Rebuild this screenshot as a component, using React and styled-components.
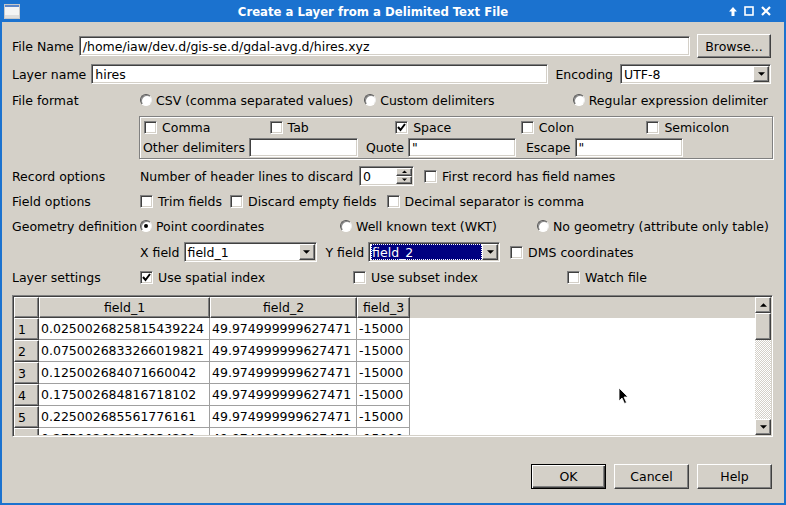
import React from "react";
import styled, { createGlobalStyle } from "styled-components";

const GlobalStyle = createGlobalStyle`
  html, body { margin: 0; padding: 0; background: #d4d0c8; }
  body {
    font-family: "DejaVu Sans", "Liberation Sans", sans-serif;
    font-size: 12.5px;
    color: #000;
  }
  * { box-sizing: border-box; }
`;

// margin helper: numbers become px, strings (like "auto") pass through
const px = (v) => (typeof v === "number" ? `${v}px` : v || 0);

const Window = styled.div`
  position: relative;
  width: 786px;
  height: 505px;
  display: flex;
  flex-direction: column;
  background: #d4d0c8;
  border: 2px solid #1b72cf;
  border-top: none;
  overflow: hidden;
`;

const TitleBar = styled.div`
  height: 22px;
  flex: none;
  display: flex;
  align-items: center;
  background: #1b72cf;
  color: #fff;
  margin: 0 -2px;
`;

const TitleIcon = styled.div`
  width: 24px;
  display: flex;
  justify-content: flex-end;
  padding-right: 4px;
`;

const TitleText = styled.div`
  flex: 1;
  text-align: center;
  font-family: "DejaVu Sans Condensed", "DejaVu Sans", sans-serif;
  font-weight: bold;
  font-size: 13px;
`;

const TitleButtons = styled.div`
  width: 64px;
  display: flex;
  align-items: center;
  gap: 5px;
  padding-left: 6px;
`;

const Content = styled.div`
  flex: 1;
  display: flex;
  flex-direction: column;
  padding: 11px 11px 0 10px;
`;

const FlexRow = styled.div`
  display: flex;
  align-items: center;
  height: ${(p) => p.h || 22}px;
  margin-top: ${(p) => p.mt || 0}px;
  gap: ${(p) => p.gap || 0}px;
`;

const FormRow = styled.div`
  display: grid;
  grid-template-columns: 128px 1fr;
  align-items: center;
  height: 22px;
  margin-top: ${(p) => p.mt || 0}px;
`;

const Label = styled.span`
  white-space: nowrap;
  margin-left: ${(p) => px(p.ml)};
  margin-right: ${(p) => px(p.mr)};
`;

const sunken = `
  background: #fff;
  border: 1px solid;
  border-color: #808080 #fff #fff #808080;
  box-shadow: inset 1px 1px #404040, inset -1px -1px #d4d0c8;
`;

const raised = `
  background: #d4d0c8;
  border: 1px solid;
  border-color: #fff #404040 #404040 #fff;
  box-shadow: inset -1px -1px #808080;
`;

const TextInput = styled.div`
  ${sunken}
  height: ${(p) => p.h || 20}px;
  width: ${(p) => (p.w ? p.w + "px" : "auto")};
  flex: ${(p) => (p.w ? "none" : 1)};
  display: flex;
  align-items: center;
  padding-left: 3px;
  white-space: nowrap;
  overflow: hidden;
  margin-left: ${(p) => px(p.ml)};
`;

const Button = styled.div`
  ${raised}
  width: ${(p) => p.w}px;
  height: ${(p) => p.h || 25}px;
  display: flex;
  align-items: center;
  justify-content: center;
  flex: none;
  margin-left: ${(p) => px(p.ml)};
  margin-right: ${(p) => px(p.mr)};
  ${(p) =>
    p.primary &&
    `
    border-color: #000;
    box-shadow: inset 1px 1px #fff, inset -1px -1px #404040, inset -2px -2px #808080;
  `}
`;

const ComboBox = styled.div`
  ${sunken}
  width: ${(p) => p.w}px;
  height: 20px;
  display: flex;
  align-items: stretch;
  padding: 2px;
  flex: none;
  margin-left: ${(p) => px(p.ml)};
  margin-right: ${(p) => px(p.mr)};
`;

const ComboValue = styled.div`
  flex: 1;
  display: flex;
  align-items: center;
  padding-left: 1px;
  background: ${(p) => (p.selected ? "#000080" : "transparent")};
  color: ${(p) => (p.selected ? "#fff" : "#000")};
  outline: ${(p) => (p.selected ? "1px dotted #fff" : "none")};
  outline-offset: -1px;
  margin-top: -1px;
  margin-bottom: -1px;
`;

const ArrowButton = styled.div`
  ${raised}
  width: 16px;
  margin: -1px -1px -1px 0;
  display: flex;
  align-items: center;
  justify-content: center;
`;

const Tri = ({ up, size = 7 }) => (
  <svg width={size} height={Math.ceil(size / 2) + 1} viewBox="0 0 8 5">
    {up ? <polygon points="0,4 8,4 4,0" fill="#000" /> : <polygon points="0,0 8,0 4,4" fill="#000" />}
  </svg>
);

const Combo = ({ w, value, selected, ml, mr }) => (
  <ComboBox w={w} ml={ml} mr={mr}>
    <ComboValue selected={selected}>{value}</ComboValue>
    <ArrowButton>
      <Tri />
    </ArrowButton>
  </ComboBox>
);

const Option = styled.label`
  display: inline-flex;
  align-items: center;
  gap: 4px;
  white-space: nowrap;
  margin-left: ${(p) => px(p.ml)};
  margin-right: ${(p) => px(p.mr)};
`;

const RadioDot = styled.span`
  width: 12px;
  height: 12px;
  border-radius: 50%;
  background: #fff;
  border: 1px solid;
  border-color: #555 #eee #fff #555;
  box-shadow: inset 1px 1px #888;
  display: flex;
  align-items: center;
  justify-content: center;
  flex: none;
  &::after {
    content: "";
    width: 4px;
    height: 4px;
    border-radius: 50%;
    background: ${(p) => (p.on ? "#000" : "transparent")};
  }
`;

const Box = styled.span`
  ${sunken}
  width: 13px;
  height: 13px;
  flex: none;
  display: flex;
  align-items: center;
  justify-content: center;
  margin-right: 1px;
`;

const Radio = ({ on, children, ml, mr }) => (
  <Option ml={ml} mr={mr}>
    <RadioDot on={on} />
    {children}
  </Option>
);

const Check = ({ on, children, ml, mr }) => (
  <Option ml={ml} mr={mr}>
    <Box>
      {on && (
        <svg width="9" height="9" viewBox="0 0 9 9">
          <path d="M1 4 L3.5 7 L8 1" stroke="#000" strokeWidth="2" fill="none" />
        </svg>
      )}
    </Box>
    {children}
  </Option>
);

const GroupBox = styled.div`
  margin: 5px 0 0 127px;
  height: 43px;
  border: 1px solid #808080;
  box-shadow: 1px 1px #fff, inset 1px 1px #fff;
  display: flex;
  flex-direction: column;
`;

const DelimGrid = styled.div`
  display: grid;
  grid-template-columns: repeat(5, minmax(0, 1fr));
  align-items: center;
  height: 20px;
  padding-left: 4px;
`;

const DelimRow = styled.div`
  display: flex;
  align-items: center;
  height: 20px;
  padding-left: 3px;
`;

const ColGrid = styled.div`
  display: grid;
  grid-template-columns: ${(p) => p.cols};
  align-items: center;
`;

const Spin = styled.div`
  ${sunken}
  width: 55px;
  height: 20px;
  display: flex;
  align-items: stretch;
  padding: 2px;
  margin-left: 6px;
  flex: none;
`;

const SpinValue = styled.div`
  flex: 1;
  display: flex;
  align-items: center;
  padding-left: 1px;
`;

const SpinButtons = styled.div`
  width: 16px;
  display: flex;
  flex-direction: column;
  margin: -1px -1px -1px 0;
`;

const SpinBtn = styled.div`
  ${raised}
  flex: 1;
  display: flex;
  align-items: center;
  justify-content: center;
`;

const Table = styled.div`
  ${sunken}
  margin-top: 7px;
  height: 142px;
  display: flex;
  padding: 1px;
`;

const Grid = styled.div`
  flex: 1;
  overflow: hidden;
  background: #fff;
  display: flex;
  flex-direction: column;
`;

const HeaderRow = styled.div`
  display: flex;
  height: 21px;
  flex: none;
  background: #d4d0c8;
`;

const HeadCell = styled.div`
  ${raised}
  width: ${(p) => p.w}px;
  flex: none;
  display: flex;
  align-items: center;
  justify-content: center;
`;

const BodyRow = styled.div`
  display: flex;
  height: 22px;
  flex: none;
`;

const RowHead = styled.div`
  ${raised}
  width: 25px;
  flex: none;
  display: flex;
  align-items: center;
  padding-left: 3px;
`;

const Cell = styled.div`
  width: ${(p) => p.w}px;
  flex: none;
  display: flex;
  align-items: center;
  padding-left: 2px;
  border-right: 1px solid #a0a0a0;
  border-bottom: 1px solid #a0a0a0;
  white-space: nowrap;
  overflow: hidden;
`;

const ScrollBar = styled.div`
  width: 16px;
  flex: none;
  display: flex;
  flex-direction: column;
  background: repeating-conic-gradient(#d4d0c8 0 25%, #fff 0 50%) 0 0 / 2px 2px;
`;

const ScrollBtn = styled.div`
  ${raised}
  height: 16px;
  flex: none;
  display: flex;
  align-items: center;
  justify-content: center;
`;

const Thumb = styled.div`
  ${raised}
  height: 27px;
  flex: none;
`;

const ScrollTrack = styled.div`
  flex: 1;
`;

const ButtonRow = styled.div`
  display: flex;
  justify-content: flex-end;
  gap: 8px;
  margin-top: 27px;
  margin-right: 1px;
`;

const Cursor = styled.svg`
  position: absolute;
  left: 616px;
  top: 387px;
`;

const rows = [
  ["0.0250026825815439224", "49.974999999627471", "-15000"],
  ["0.0750026833266019821", "49.974999999627471", "-15000"],
  ["0.125002684071660042", "49.974999999627471", "-15000"],
  ["0.175002684816718102", "49.974999999627471", "-15000"],
  ["0.225002685561776161", "49.974999999627471", "-15000"],
  ["0.275002686306834221", "49.974999999627471", "-15000"],
];

const widths = [171, 147, 53];

export default function App() {
  return (
    <>
      <GlobalStyle />
      <Window>
        <TitleBar>
          <TitleIcon>
            <svg width="16" height="15" viewBox="0 0 16 15">
              <rect x="0.5" y="0.5" width="15" height="14" fill="#f4f4f4" stroke="#c8c8c8" />
              <rect x="1" y="1" width="14" height="2" fill="#5b86c9" />
              <rect x="1" y="11" width="14" height="3" fill="#dedede" />
            </svg>
          </TitleIcon>
          <TitleText>Create a Layer from a Delimited Text File</TitleText>
          <TitleButtons>
            <svg width="10" height="11" viewBox="0 0 10 11">
              <path d="M5 1 L1 5.5 H3.5 V10 H6.5 V5.5 H9 Z" fill="#fff" />
            </svg>
            <svg width="12" height="12" viewBox="0 0 12 12">
              <rect x="2" y="2" width="8" height="8" fill="none" stroke="#fff" strokeWidth="1.6" />
            </svg>
            <svg width="12" height="12" viewBox="0 0 12 12">
              <path d="M2 2 L10 10 M10 2 L2 10" stroke="#fff" strokeWidth="2.2" />
            </svg>
          </TitleButtons>
        </TitleBar>

        <Content>
          <FlexRow h={26} gap={5}>
            <Label>File Name</Label>
            <TextInput>/home/iaw/dev.d/gis-se.d/gdal-avg.d/hires.xyz</TextInput>
            <Button w={74} h={24} ml={2} mr={2}>
              Browse...
            </Button>
          </FlexRow>

          <FlexRow h={24} mt={3} gap={5}>
            <Label>Layer name</Label>
            <TextInput>hires</TextInput>
            <Label ml={2}>Encoding</Label>
            <Combo w={151} value="UTF-8" ml={2} mr={2} />
          </FlexRow>

          <FormRow mt={3}>
            <Label>File format</Label>
            <FlexRow>
              <Radio>CSV (comma separated values)</Radio>
              <Radio ml={11}>Custom delimiters</Radio>
              <Radio ml="auto" mr={5}>
                Regular expression delimiter
              </Radio>
            </FlexRow>
          </FormRow>

          <GroupBox>
            <DelimGrid>
              <Check>Comma</Check>
              <Check>Tab</Check>
              <Check on>Space</Check>
              <Check>Colon</Check>
              <Check>Semicolon</Check>
            </DelimGrid>
            <DelimRow>
              <Label>Other delimiters</Label>
              <TextInput w={109} h={19} ml={4} />
              <Label ml={8}>Quote</Label>
              <TextInput w={108} h={19} ml={4}>"</TextInput>
              <Label ml={10}>Escape</Label>
              <TextInput w={108} h={19} ml={4}>"</TextInput>
            </DelimRow>
          </GroupBox>

          <FormRow mt={6}>
            <Label>Record options</Label>
            <FlexRow>
              <Label>Number of header lines to discard</Label>
              <Spin>
                <SpinValue>0</SpinValue>
                <SpinButtons>
                  <SpinBtn>
                    <Tri up size={5} />
                  </SpinBtn>
                  <SpinBtn>
                    <Tri size={5} />
                  </SpinBtn>
                </SpinButtons>
              </Spin>
              <Check ml={10}>First record has field names</Check>
            </FlexRow>
          </FormRow>

          <FormRow mt={3}>
            <Label>Field options</Label>
            <FlexRow>
              <Check>Trim fields</Check>
              <Check ml={8}>Discard empty fields</Check>
              <Check ml={10}>Decimal separator is comma</Check>
            </FlexRow>
          </FormRow>

          <FormRow mt={3}>
            <Label>Geometry definition</Label>
            <ColGrid cols="200px 197px 1fr">
              <Radio on>Point coordinates</Radio>
              <Radio>Well known text (WKT)</Radio>
              <Radio>No geometry (attribute only table)</Radio>
            </ColGrid>
          </FormRow>

          <FormRow mt={4}>
            <span />
            <FlexRow>
              <Label>X field</Label>
              <Combo w={133} value="field_1" ml={4} />
              <Label ml={9}>Y field</Label>
              <Combo w={132} value="field_2" selected ml={4} />
              <Check ml={10}>DMS coordinates</Check>
            </FlexRow>
          </FormRow>

          <FormRow mt={3}>
            <Label>Layer settings</Label>
            <ColGrid cols="213px 214px 1fr">
              <Check on>Use spatial index</Check>
              <Check>Use subset index</Check>
              <Check>Watch file</Check>
            </ColGrid>
          </FormRow>

          <Table>
            <Grid>
              <HeaderRow>
                <HeadCell w={25} />
                <HeadCell w={171}>field_1</HeadCell>
                <HeadCell w={147}>field_2</HeadCell>
                <HeadCell w={53}>field_3</HeadCell>
              </HeaderRow>
              {rows.map((r, i) => (
                <BodyRow key={i}>
                  <RowHead>{i + 1}</RowHead>
                  {r.map((v, j) => (
                    <Cell key={j} w={widths[j]}>
                      {v}
                    </Cell>
                  ))}
                </BodyRow>
              ))}
            </Grid>
            <ScrollBar>
              <ScrollBtn>
                <Tri up />
              </ScrollBtn>
              <Thumb />
              <ScrollTrack />
              <ScrollBtn>
                <Tri />
              </ScrollBtn>
            </ScrollBar>
          </Table>

          <ButtonRow>
            <Button w={75} primary>
              OK
            </Button>
            <Button w={75}>Cancel</Button>
            <Button w={75}>Help</Button>
          </ButtonRow>
        </Content>

        <Cursor width="12" height="18" viewBox="0 0 12 18">
          <path d="M1 1 V14 L4 11 L6.5 16.5 L8.5 15.5 L6 10 H10 Z" fill="#000" stroke="#fff" strokeWidth="0.8" />
        </Cursor>
      </Window>
    </>
  );
}
